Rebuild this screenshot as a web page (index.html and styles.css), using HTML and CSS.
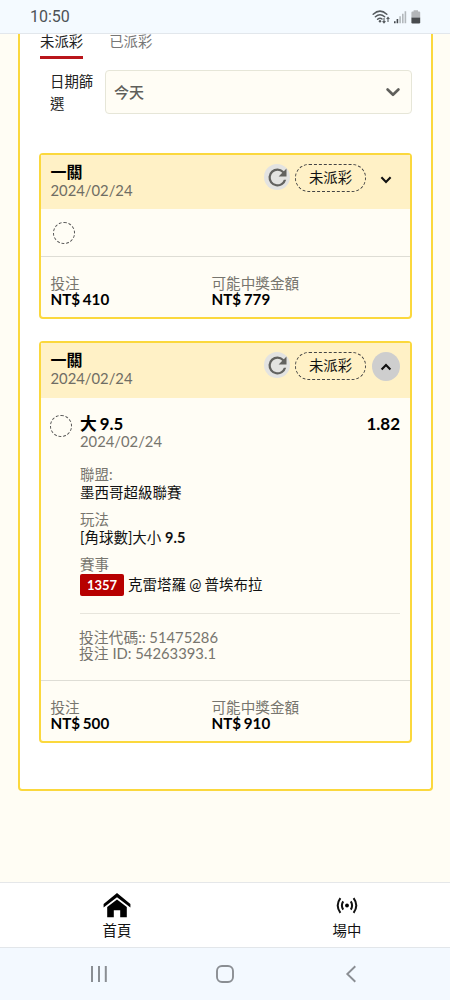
FILE: index.html
```html
<!DOCTYPE html>
<html lang="zh-Hant">
<head>
<meta charset="utf-8">
<title>注單</title>
<link rel="stylesheet" href="styles.css">
</head>
<body>
<div class="screen">
  <header class="status">
    <span class="clock">10:50</span>
    <svg class="status-icons" width="50" height="16" viewBox="0 0 50 16">
      <g fill="none" stroke="#555a5e" stroke-width="1.5" stroke-linecap="round">
        <path d="M1.2 5.2Q8 -1 14.8 5.2M3.4 7.8Q8 3.6 12.6 7.8M5.6 10.3Q8 8.2 10 10"/>
      </g>
      <circle cx="8" cy="12.3" r="1.2" fill="#555a5e"/>
      <path d="M12 9v4.6M10.6 12.2l1.4 1.6 1.4-1.6M16 13V8.6M14.6 10L16 8.4l1.4 1.6" fill="none" stroke="#555a5e" stroke-width="1.1"/>
      <path d="M22.8 12.2v2M25.4 10v4.2" stroke="#44494d" stroke-width="1.6"/>
      <path d="M28.1 7.3v6.9M30.8 4.8v9.4M33.4 2.2v12" stroke="#b3b8bc" stroke-width="1.6"/>
      <path d="M41.6 1.2h4.4v1.4h1.2q1 0 1 1V8.6h-8.8V3.6q0-1 1-1h1.2z" fill="#b3b6b9"/>
      <path d="M39.4 8.6h8.8v4.6q0 1.2-1.2 1.2h-6.4q-1.2 0-1.2-1.2z" fill="#484b4e"/>
    </svg>
  </header>

  <main class="content">
    <section class="panel">
      <nav class="tabs">
        <span class="tab active">未派彩</span>
        <span class="tab">已派彩</span>
      </nav>
      <div class="filter">
        <span class="filter-label">日期篩選</span>
        <div class="select">
          <span>今天</span>
          <svg width="14" height="9" viewBox="0 0 14 9"><path d="M1.6 1.5L7 6.8l5.4-5.3" fill="none" stroke="#5f5f5b" stroke-width="2.6" stroke-linecap="round" stroke-linejoin="round"/></svg>
        </div>
      </div>

      <article class="card">
        <div class="card-head">
          <div class="card-title"><b>一關</b><span>2024/02/24</span></div>
          <span class="refresh"><svg width="27" height="27" viewBox="0 0 24 24"><path fill="#62625f" d="M17.65 6.35A7.96 7.96 0 0 0 12 4a8 8 0 1 0 7.73 10h-2.08A6 6 0 1 1 12 6c1.66 0 3.14.69 4.22 1.78L13 11h7V4z"/></svg></span>
          <span class="pill">未派彩</span>
          <span class="toggle"><svg width="12" height="8" viewBox="0 0 12 8"><path d="M1.4 1.3L6 5.9l4.6-4.6" fill="none" stroke="#111" stroke-width="2.1"/></svg></span>
        </div>
        <div class="empty"><span class="ring"></span></div>
        <div class="totals">
          <div class="total"><span>投注</span><b>NT$ 410</b></div>
          <div class="total"><span>可能中獎金額</span><b>NT$ 779</b></div>
        </div>
      </article>

      <article class="card expanded">
        <div class="card-head">
          <div class="card-title"><b>一關</b><span>2024/02/24</span></div>
          <span class="refresh"><svg width="27" height="27" viewBox="0 0 24 24"><path fill="#62625f" d="M17.65 6.35A7.96 7.96 0 0 0 12 4a8 8 0 1 0 7.73 10h-2.08A6 6 0 1 1 12 6c1.66 0 3.14.69 4.22 1.78L13 11h7V4z"/></svg></span>
          <span class="pill">未派彩</span>
          <span class="toggle open"><svg width="12" height="8" viewBox="0 0 12 8"><path d="M1.6 6.5L6 2.1l4.4 4.4" fill="none" stroke="#111" stroke-width="2.1"/></svg></span>
        </div>
        <div class="bet">
          <span class="ring"></span>
          <div class="bet-body">
            <div class="pick"><b class="pick-name">大 9.5</b><b>1.82</b></div>
            <div class="date">2024/02/24</div>
            <dl class="facts">
              <dt>聯盟:</dt><dd>墨西哥超級聯賽</dd>
              <dt>玩法</dt><dd>[角球數]大小 <b>9.5</b></dd>
              <dt>賽事</dt><dd class="match"><span class="badge">1357</span>克雷塔羅 @ 普埃布拉</dd>
            </dl>
            <div class="codes"><div>投注代碼:: 51475286</div><div>投注 ID: 54263393.1</div></div>
          </div>
        </div>
        <div class="totals">
          <div class="total"><span>投注</span><b>NT$ 500</b></div>
          <div class="total"><span>可能中獎金額</span><b>NT$ 910</b></div>
        </div>
      </article>
    </section>
  </main>

  <nav class="bottom">
    <a class="bottom-item home">
      <svg width="28" height="25" viewBox="0 0 28 25"><path d="M14 0L0.6 11v3.6L14 4.2l13.4 10.4V11z"/><path d="M14 6.6L4.2 14v10.2h6.6v-7h6.4v7h6.6V14z"/></svg>
      <span>首頁</span>
    </a>
    <a class="bottom-item live">
      <svg width="22" height="25" viewBox="0 0 22 25"><circle cx="11" cy="12.5" r="1.9"/><path d="M7.2 8.4Q4.6 12.5 7.2 16.6M14.8 8.4Q17.4 12.5 14.8 16.6M4.4 5.2Q-1 12.5 4.4 19.8M17.6 5.2Q23 12.5 17.6 19.8" fill="none" stroke="#111" stroke-width="2"/></svg>
      <span>場中</span>
    </a>
  </nav>

  <footer class="system">
    <svg width="18" height="18" viewBox="0 0 18 18"><path d="M2 1v16M9 1v16M15.8 1v16" stroke="#8a8e93" stroke-width="2"/></svg>
    <svg width="18" height="18" viewBox="0 0 18 18"><rect x="1" y="1" width="16" height="16" rx="5" fill="none" stroke="#8a8e93" stroke-width="1.9"/></svg>
    <svg width="18" height="18" viewBox="0 0 18 18"><path d="M13.3 1.2L5.3 9l8 7.8" fill="none" stroke="#8a8e93" stroke-width="1.9"/></svg>
  </footer>
</div>
</body>
</html>
```
FILE: styles.css
```css
* { box-sizing: border-box; }
body { margin: 0; font: 14.8px/16px Lato, "Noto Sans CJK TC", sans-serif; color: #111; }
svg { display: block; flex: none; }
.screen { width: 450px; height: 1000px; display: flex; flex-direction: column; overflow: hidden; }

.status { height: 34px; flex: none; padding: 0 28px 0 30px; display: flex; align-items: center; justify-content: space-between; background: #f4faff; border-bottom: 1px solid #e2e7ec; }
.clock { font: 16px/32px Roboto, sans-serif; color: #4d5256; }

.content { flex: 1; min-height: 0; overflow: hidden; background: #fffdf4; padding: 0 17px 0 18px; }
.panel { height: 757px; background: #fff; border: 2px solid #fbd83d; border-top: 0; border-radius: 0 0 4px 4px; padding: 0 19px; }
.tabs { display: flex; gap: 26px; height: 25px; padding-left: 1px; }
.tab { font-size: 14.4px; line-height: 15px; color: #777; }
.tab.active { color: #222; border-bottom: 3px solid #b9151b; }
.filter { display: flex; padding: 11px 0 0 11px; margin-bottom: 39px; }
.filter-label { width: 55px; font-size: 14.4px; line-height: 22px; color: #222; padding: 1px 9px 0 0; height: 44px; }
.select { flex: 1; height: 44px; border: 1px solid #e6e6d8; border-radius: 4px; background: #fffdf5; display: flex; align-items: center; justify-content: space-between; padding: 0 11px 0 8px; color: #5f5f5b; font-size: 15px; font-weight: 500; }

.card { border: 2px solid #fbd83d; border-radius: 4px; background: #fffdf5; margin-bottom: 22px; }
.card-head { height: 54px; background: #fff1c6; display: flex; padding: 8px 10px 0 9.5px; }
.expanded .card-head { height: 55px; }
.card-title { flex: 1; display: flex; flex-direction: column; color: #6f6d64; }
.card-title b { font-size: 16px; line-height: 18px; height: 18px; color: #000; }
.card-title span { line-height: 18px; }
.refresh { width: 26px; height: 26px; border-radius: 50%; background: #e3e3e1; display: flex; align-items: center; justify-content: center; margin: 1px 5px 0 0; }
.pill { width: 71px; height: 28px; border: 1px dashed #444; border-radius: 14px; text-align: center; font-size: 14.4px; line-height: 25px; margin: 1px 6px 0 0; }
.toggle { width: 28px; height: 29px; border-radius: 50%; display: flex; align-items: center; justify-content: center; margin-top: 2px; }
.toggle.open { background: #cecece; margin-top: 1px; }

.ring { flex: none; width: 22px; height: 22px; border: 1px dashed #555; border-radius: 50%; }
.empty { height: 48px; padding: 13px 12px; display: flex; border-bottom: 1px solid #deddd5; }
.totals { height: 60px; display: flex; padding: 19px 9.5px 0; }
.total { width: 161px; display: flex; flex-direction: column; color: #77756e; font-size: 14.6px; }
.total b { color: #000; font-size: 15.2px; line-height: 15px; word-spacing: -1px; }

.bet { height: 283px; border-bottom: 1px solid #deddd5; padding: 17px 10px 0 9px; display: flex; gap: 8px; }
.bet-body { flex: 1; }
.pick { display: flex; justify-content: space-between; font-size: 17px; line-height: 18px; color: #000; }
.pick-name { font-size: 16.8px; word-spacing: -1px; }
.date { line-height: 16px; color: #77756e; }
.facts { margin: 17px 0 0; font-size: 14.5px; line-height: 18px; }
dt { color: #77756e; }
dd { margin: 0 0 9px; }
.match { display: flex; align-items: center; height: 22px; margin-bottom: 17px; font-size: 14.5px; word-spacing: -0.5px; }
.badge { width: 44px; height: 22px; line-height: 22px; background: #b70000; color: #fff; border-radius: 2px; font-weight: 700; font-size: 13px; text-align: center; margin-right: 4px; }
.codes { border-top: 1px solid #e7e5dc; padding-top: 15px; color: #77756e; }
.codes div { margin-left: -1px; }

.bottom { height: 65px; flex: none; display: flex; border-top: 1px solid #e5e7e9; background: #fff; }
.bottom-item { display: flex; flex-direction: column; align-items: center; padding-top: 10px; font-size: 14.4px; line-height: 25px; }
.home { width: 234px; }
.live { width: 226px; margin-right: -10px; }
.system { height: 53px; flex: none; background: #f3f9ff; border-top: 1px solid #e2e6ea; display: flex; justify-content: space-between; align-items: center; padding: 0 90px; }
```
